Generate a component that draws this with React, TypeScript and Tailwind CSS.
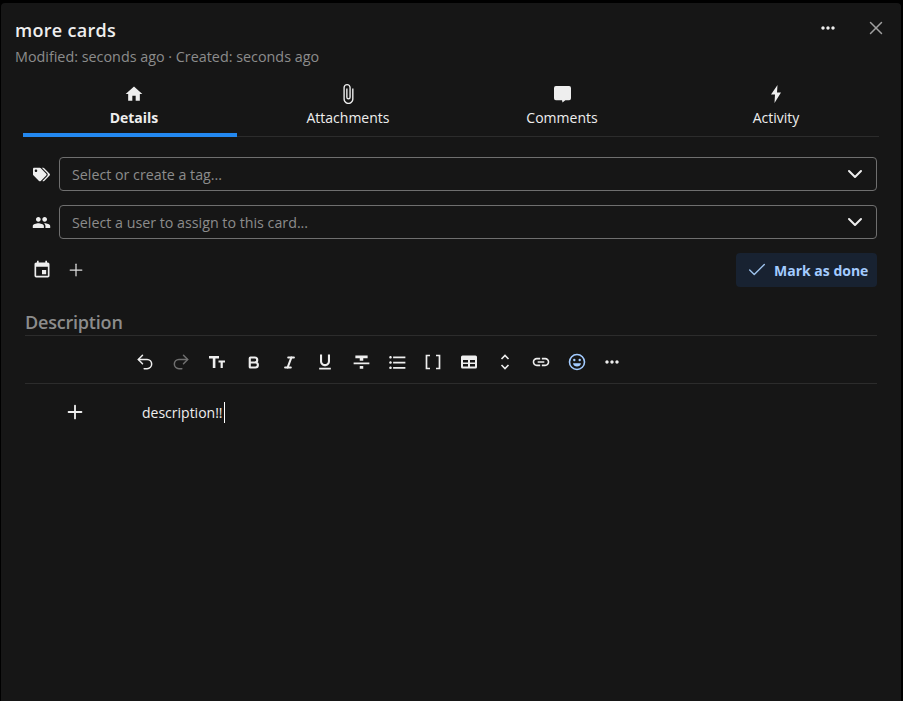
import { Bold, ChevronDown, Check, Italic, Plus, X, Undo2, Redo2 } from "lucide-react";
import { FaTags } from "react-icons/fa";
import {
  MdHome,
  MdAttachFile,
  MdPeople,
  MdEvent,
  MdFormatStrikethrough,
  MdFormatListBulleted,
  MdFormatUnderlined,
  MdLink,
  MdMoreHoriz,
} from "react-icons/md";

function CommentIcon() {
  return (
    <svg width="17" height="17" viewBox="0 0 18 18" fill="currentColor">
      <path d="M2 0h14a2 2 0 0 1 2 2v11a2 2 0 0 1-2 2h-4l-3 2.500-.5-2.500H2a2 2 0 0 1-2-2V2a2 2 0 0 1 2-2z" />
    </svg>
  );
}

function BoltIcon() {
  return (
    <svg width="10" height="18" viewBox="0 0 10 18" fill="currentColor">
      <path d="M6.500 0 0 9.500h4L3.500 18 10 7.500H6z" />
    </svg>
  );
}

function TextSizeIcon() {
  return (
    <svg width="18" height="18" viewBox="0 0 18 18" fill="currentColor">
      <path d="M1 3h10v2.400H7.400V15H4.800V5.400H1zM10.500 7.500H17v2h-2.200V15h-2.200V9.500h-2.100z" />
    </svg>
  );
}

function BracketsIcon() {
  return (
    <svg width="18" height="18" viewBox="0 0 18 18" fill="none" stroke="currentColor" strokeWidth="1.7">
      <path d="M6 2.500H2.500v13H6M12 2.500h3.500v13H12" />
    </svg>
  );
}

function TableIcon() {
  return (
    <svg width="16" height="16" viewBox="0 0 16 16" fill="currentColor">
      <path
        fillRule="evenodd"
        d="M1.500 1.500h13A1.500 1.500 0 0 1 16 3v10a1.500 1.500 0 0 1-1.500 1.500h-13A1.500 1.500 0 0 1 0 13V3a1.500 1.500 0 0 1 1.500-1.500zM2 6v2.500h5V6zm7 0v2.500h5V6zM2 10v2.500h5V10zm7 0v2.500h5V10z"
      />
    </svg>
  );
}

function ExpandIcon() {
  return (
    <svg width="18" height="18" viewBox="0 0 18 18" fill="none" stroke="currentColor" strokeWidth="1.600">
      <path d="M5.500 6 9 2.500 12.500 6M5.500 12 9 15.500 12.500 12" />
    </svg>
  );
}

function SmileIcon() {
  return (
    <svg width="18" height="18" viewBox="0 0 18 18" fill="none">
      <circle cx="9" cy="9" r="7.500" stroke="#a3cbff" strokeWidth="1.600" />
      <circle cx="6.300" cy="7" r="1.200" fill="#a3cbff" />
      <circle cx="11.700" cy="7" r="1.200" fill="#a3cbff" />
      <path d="M5 10.200h8c-.4 2.200-2 3.300-4 3.300s-3.600-1.100-4-3.300z" fill="#a3cbff" />
    </svg>
  );
}

const tabs = [
  { label: "Details", icon: <MdHome size={20} />, active: true },
  { label: "Attachments", icon: <MdAttachFile size={22} /> },
  { label: "Comments", icon: <CommentIcon /> },
  { label: "Activity", icon: <BoltIcon /> },
];

const tools = [
  <Undo2 size={20} strokeWidth={1.8} />,
  <Redo2 size={20} strokeWidth={1.8} className="text-[#6f6f6f]" />,
  <TextSizeIcon />,
  <Bold size={15} strokeWidth={3.4} />,
  <Italic size={15} strokeWidth={3.4} />,
  <MdFormatUnderlined size={20} />,
  <MdFormatStrikethrough size={21} />,
  <MdFormatListBulleted size={21} />,
  <BracketsIcon />,
  <TableIcon />,
  <ExpandIcon />,
  <MdLink size={20} />,
  <SmileIcon />,
  <MdMoreHoriz size={20} className="-ml-[3px]" />,
];

function SelectRow({ icon, placeholder }: { icon: React.ReactNode; placeholder: string }) {
  return (
    <div className="flex items-center">
      <div className="w-[35px] flex justify-center text-[#eeeeee]">{icon}</div>
      <div className="flex-1 h-[34px] border border-[#6f6f6f] rounded-[4px] flex items-center justify-between pl-3 pr-[9px]">
        <span className="text-[14.25px] pt-px text-[#8c8c8c]">{placeholder}</span>
        <ChevronDown size={24} strokeWidth={2} className="text-[#eeeeee]" />
      </div>
    </div>
  );
}

export default function App() {
  return (
    <div
      className="w-[903px] h-[701px] bg-black pt-[3px] pl-[1px] pr-[2px] overflow-hidden"
      style={{ fontFamily: '"Open Sans", "Noto Sans", sans-serif' }}
    >
      <div className="h-[698px] bg-[#161616] rounded-t-[4px]">
        <div className="flex justify-between pl-[14px] pr-[14px] pt-[15px]">
          <div>
            <h1 className="text-[18px] leading-[24px] font-semibold text-[#eeeeee] tracking-[0.3px]">more cards</h1>
            <p className="text-[14.35px] leading-[20px] mt-[5px] text-[#8c8c8c]">
              Modified: seconds ago · Created: seconds ago
            </p>
          </div>
          <div className="flex gap-[27px] items-start h-[22px]">
            <MdMoreHoriz size={20} className="text-[#eeeeee]" />
            <X size={22} strokeWidth={1.6} className="text-[#a0a0a0] -mt-[1px]" />
          </div>
        </div>

        <div className="mx-[22px] mt-[15px] flex border-b border-[#2c2c2c]">
          {tabs.map((t) => (
            <div
              key={t.label}
              className={
                t.active
                  ? "w-[214px] h-[55px] -mb-px pl-2 flex flex-col items-center border-b-4 border-[#2388f0] text-[#eeeeee] font-bold"
                  : "w-[214px] h-[55px] -mb-px pl-2 flex flex-col items-center text-[#eeeeee]"
              }
            >
              <div className="h-[24px] flex items-center justify-center">{t.icon}</div>
              <span className="text-[14px] leading-[22px] pt-px">{t.label}</span>
            </div>
          ))}
        </div>

        <div className="mt-[20px] pl-[23px] pr-[24px] flex flex-col gap-[14px]">
          <SelectRow icon={<FaTags size={17} />} placeholder="Select or create a tag..." />
          <SelectRow icon={<MdPeople size={19} />} placeholder="Select a user to assign to this card..." />
          <div className="flex items-center justify-between h-[34px]">
            <div className="flex items-center">
              <div className="w-[35px] flex justify-center text-[#eeeeee]">
                <MdEvent size={20} />
              </div>
              <Plus size={20} strokeWidth={1.5} className="text-[#dddddd] ml-[7px]" />
            </div>
            <div className="w-[141px] h-[34px] rounded-[4px] bg-[#182231] flex items-center pl-[10px] gap-[6px]">
              <Check size={22} strokeWidth={1.5} className="text-[#9fc4ee]" />
              <span className="text-[14px] font-bold text-[#a3cbff]">Mark as done</span>
            </div>
          </div>
        </div>

        <div className="mt-[23px] ml-[24px] mr-[24px]">
          <div className="text-[18px] leading-[24px] h-[26px] font-semibold text-[#8c8c8c] tracking-[-0.2px] border-b border-[#2c2c2c]">
            Description
          </div>
          <div className="h-[48px] border-b border-[#2c2c2c] flex items-center pl-[102px] pt-[5px] text-[#eeeeee]">
            {tools.map((tool, i) => (
              <div key={i} className="w-[36px] flex justify-center">
                {tool}
              </div>
            ))}
          </div>
          <div className="flex items-center h-[56px] text-[#eeeeee]">
            <Plus size={22} strokeWidth={2} className="ml-[39px]" />
            <span className="ml-[56px] text-[14px] leading-[20px] pt-px border-r border-white pr-px">description!!</span>
          </div>
        </div>
      </div>
    </div>
  );
}
